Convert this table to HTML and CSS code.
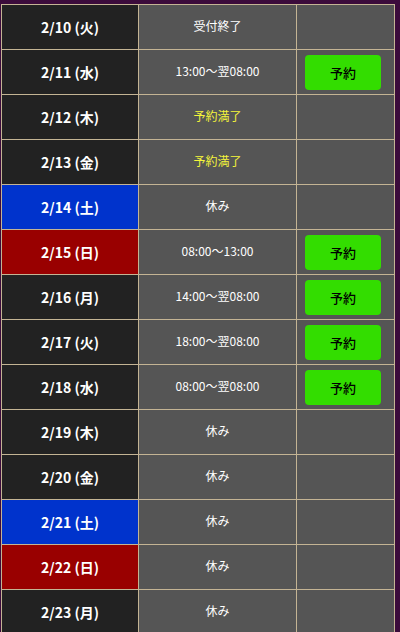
FILE: index.html
```html
<!DOCTYPE html>
<html lang="ja">
<head>
<meta charset="utf-8">
<link rel="stylesheet" href="styles.css">
</head>
<body>
<div class="wrap">
  <div class="grid">
    <div class="date">2/10 (火)</div><div class="time">受付終了</div><div class="act"></div>
    <div class="date">2/11 (水)</div><div class="time">13:00〜翌08:00</div><div class="act"><span class="btn">予約</span></div>
    <div class="date">2/12 (木)</div><div class="time full">予約満了</div><div class="act"></div>
    <div class="date">2/13 (金)</div><div class="time full">予約満了</div><div class="act"></div>
    <div class="date sat">2/14 (土)</div><div class="time">休み</div><div class="act"></div>
    <div class="date sun">2/15 (日)</div><div class="time">08:00〜13:00</div><div class="act"><span class="btn">予約</span></div>
    <div class="date">2/16 (月)</div><div class="time">14:00〜翌08:00</div><div class="act"><span class="btn">予約</span></div>
    <div class="date">2/17 (火)</div><div class="time">18:00〜翌08:00</div><div class="act"><span class="btn">予約</span></div>
    <div class="date">2/18 (水)</div><div class="time">08:00〜翌08:00</div><div class="act"><span class="btn">予約</span></div>
    <div class="date">2/19 (木)</div><div class="time">休み</div><div class="act"></div>
    <div class="date">2/20 (金)</div><div class="time">休み</div><div class="act"></div>
    <div class="date sat">2/21 (土)</div><div class="time">休み</div><div class="act"></div>
    <div class="date sun">2/22 (日)</div><div class="time">休み</div><div class="act"></div>
    <div class="date">2/23 (月)</div><div class="time">休み</div><div class="act"></div>
  </div>
</div>
</body>
</html>
```
FILE: styles.css
```css
html, body {
  margin: 0;
  padding: 0;
  background: #3b0b3b;
}
body {
  font-family: "Noto Sans CJK JP", "Noto Sans", sans-serif;
  overflow: hidden;
}
.wrap {
  padding: 4px 6px 0 1px;
}
.grid {
  display: grid;
  grid-template-columns: 136px 157px 97px;
  grid-auto-rows: 44px;
  gap: 1px;
  padding: 1px;
  background: #c4b494;
  width: max-content;
}
.date, .time, .act {
  display: flex;
  align-items: center;
  justify-content: center;
}
.date {
  background: #222222;
  color: #ffffff;
  font-weight: bold;
  font-size: 14px;
}
.date.sat { background: #0033cc; }
.date.sun { background: #990000; }
.time {
  background: #555555;
  color: #ffffff;
  font-size: 12px;
  padding-bottom: 3px;
}
.time.full { color: #f5f53a; }
.act {
  background: #555555;
  justify-content: flex-start;
  padding-left: 8px;
}
.btn {
  display: flex;
  align-items: center;
  justify-content: center;
  width: 76px;
  height: 35px;
  border-radius: 4px;
  background: #33dd00;
  color: #000000;
  font-size: 13px;
  font-weight: 500;
}
```
